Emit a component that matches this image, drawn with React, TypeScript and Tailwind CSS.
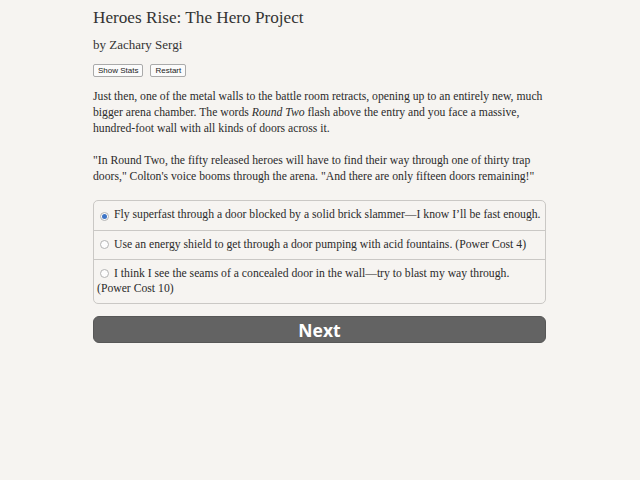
import { useState } from 'react';

const serif = "font-['Palatino_Linotype','Book_Antiqua','Liberation_Serif',serif]";

const choices = [
  'Fly superfast through a door blocked by a solid brick slammer\u2014I know I\u2019ll be fast enough.',
  'Use an energy shield to get through a door pumping with acid fountains. (Power Cost 4)',
  'I think I see the seams of a concealed door in the wall\u2014try to blast my way through. (Power Cost 10)',
];

const App = () => {
  const [selected, setSelected] = useState<number>(0);

  return (
    <div className={`w-[640px] h-[480px] bg-[#f6f4f1] text-[#2b2b2b] ${serif}`}>
      <div className="w-[453px] ml-[93px] pt-[7px] flex flex-col">
        <h1 className="text-[17.2px] leading-[22px] text-[#333]">Heroes Rise: The Hero Project</h1>
        <div className="mt-[7px] text-[13px] leading-[18px] text-[#333]">by Zachary Sergi</div>
        <div className="mt-[10px] flex flex-row gap-[7px] font-['Liberation_Sans',sans-serif]">
          <button className="h-[13px] px-[4px] text-[8px] leading-[11px] text-[#222] bg-[#fbfbfb] border border-[#aaa] rounded-[2px]">
            Show Stats
          </button>
          <button className="h-[13px] px-[4px] text-[8px] leading-[11px] text-[#222] bg-[#fbfbfb] border border-[#aaa] rounded-[2px]">
            Restart
          </button>
        </div>
        <p className="mt-[12px] text-[11.7px] leading-[16px] whitespace-nowrap">
          Just then, one of the metal walls to the battle room retracts, opening up to an entirely new, much
          <br />
          bigger arena chamber. The words <i>Round Two</i> flash above the entry and you face a massive,
          <br />
          hundred-foot wall with all kinds of doors across it.
        </p>
        <p className="mt-[16px] text-[11.7px] leading-[16px] whitespace-nowrap">
          "In Round Two, the fifty released heroes will have to find their way through one of thirty trap
          <br />
          doors," Colton's voice booms through the arena. "And there are only fifteen doors remaining!"
        </p>
        <div className="mt-[15px] border border-[#cac8c5] rounded-[5px] flex flex-col">
          {choices.map((choice, idx) => (
            <div
              key={idx}
              onClick={() => setSelected(idx)}
              className={
                idx === 0
                  ? 'pl-[3px] pr-[4px] pt-[7px] pb-[7px] text-[11.7px] leading-[14.5px] cursor-pointer'
                  : 'pl-[3px] pr-[4px] pt-[7px] pb-[7px] text-[11.7px] leading-[14.5px] cursor-pointer border-t border-[#cac8c5]'
              }
            >
              <span className="inline-flex items-center justify-center w-[9px] h-[9px] ml-[3px] mr-[5px] rounded-full border border-[#b3b3b3] bg-[#fdfdfd] align-[-1px]">
                {selected === idx && <span className="w-[5px] h-[5px] rounded-full bg-[#3d74c6]"></span>}
              </span>
              {choice}
            </div>
          ))}
        </div>
        <button className="mt-[12px] h-[27px] w-full bg-[#636363] border border-[#575757] rounded-[6px] text-white text-[17.5px] leading-[24px] font-bold font-['Open_Sans',sans-serif]">
          Next
        </button>
      </div>
    </div>
  );
};

export default App;
